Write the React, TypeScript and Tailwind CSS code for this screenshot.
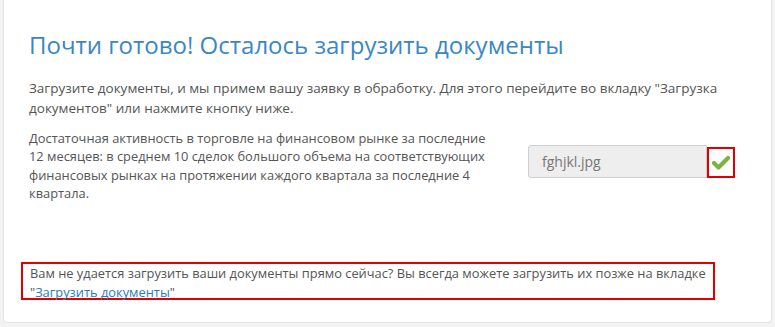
export default function App() {
  return (
    <div
      className="h-[327px] w-[775px] bg-[#f3f3f3] px-[3px]"
      style={{ fontFamily: '"Open Sans", "Noto Sans", sans-serif' }}
    >
      <div className="flex h-[323px] flex-col rounded-b border-x border-b border-[#e4e4e4] bg-white pl-[25px] pr-[20px] pt-[28px]">
        <h1 className="text-[24px] leading-[34px] text-[#3a87c3]">
          Почти готово! Осталось загрузить документы
        </h1>
        <p className="mt-[16px] w-[725px] text-[13.5px] leading-[20px] text-[#555]">
          Загрузите документы, и мы примем вашу заявку в обработку. Для этого перейдите во вкладку "Загрузка
          документов" или нажмите кнопку ниже.
        </p>
        <div className="mt-[11px] flex items-start">
          <p className="w-[470px] text-[12.85px] leading-[18.3px] text-[#555]">
            Достаточная активность в торговле на финансовом рынке за последние 12 месяцев: в среднем 10 сделок
            большого объема на соответствующих финансовых рынках на протяжении каждого квартала за последние 4
            квартала.
          </p>
          <div className="ml-[29px] mt-[16px] flex items-start">
            <div className="flex h-[33px] w-[179px] items-center rounded-l-[3px] border border-[#cfcfcf] bg-[#eeeeee] pl-[13px] text-[14px] text-[#777]">
              fghjkl.jpg
            </div>
            <div className="mt-[2px] flex h-[31px] w-[28px] items-center justify-center border-2 border-[#e00000]">
              <svg width="18" height="15" viewBox="0 0 18 15">
                <path d="M2 8 L6.5 12.5 L16 3" fill="none" stroke="#7cb342" strokeWidth="4.2" strokeLinecap="round" strokeLinejoin="round" />
              </svg>
            </div>
          </div>
        </div>
        <div className="mt-auto mb-[22px] -ml-[8px] h-[38px] w-[694px] border-2 border-[#e00000] px-[7px] text-[12.85px] leading-[19px] text-[#555]">
          <span className="block whitespace-nowrap">
            Вам не удается загрузить ваши документы прямо сейчас? Вы всегда можете загрузить их позже на вкладке
          </span>
          <span className="block">
            "<span className="text-[#2a7bbd]">Загрузить документы</span>"
          </span>
        </div>
      </div>
    </div>
  );
}
